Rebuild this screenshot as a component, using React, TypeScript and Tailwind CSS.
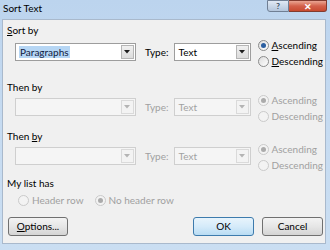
import React from "react";

const font = { fontFamily: 'Lato, "Noto Sans", sans-serif' };

function Combo({ value, selected, disabled, width }: { value: string; selected?: boolean; disabled?: boolean; width: string }) {
  return (
    <div
      className={`${width} h-[18px] flex items-stretch border ${disabled ? "border-[#cfcfcf] bg-[#f5f5f5]" : "border-[#9d9d9d] bg-white"}`}
    >
      <div className="flex-1 flex items-center pl-[3px]">
        {value && (
          <span
            className={`text-[10px] leading-[12px] px-[1px] ${selected ? "bg-[#b6d6f4] text-[#102040]" : disabled ? "text-[#a2a2a2]" : "text-black"}`}
          >
            {value}
          </span>
        )}
      </div>
      <div className="p-[1px] flex">
        <div
          className={`w-[13px] flex items-center justify-center border ${disabled ? "border-[#dadada] bg-[#f3f3f3]" : "border-[#b5b5b5] bg-gradient-to-b from-[#f0f0f0] to-[#dcdcdc]"}`}
        >
          <svg width="6" height="4" viewBox="0 0 6 4">
            <path d="M0 0 L6 0 L3 3.5 Z" fill={disabled ? "#b4b4b4" : "#1e1e1e"} />
          </svg>
        </div>
      </div>
    </div>
  );
}

function Radio({ checked, disabled, label, u }: { checked?: boolean; disabled?: boolean; label: string; u?: number }) {
  return (
    <div className="flex items-center gap-[3px] h-[16px]">
      <div
        className={`w-[11px] h-[11px] rounded-full border flex items-center justify-center ${disabled ? "border-[#cacaca] bg-[#f3f3f3]" : "border-[#8a8b8b] bg-gradient-to-br from-[#dcdcdc] to-white"}`}
      >
        {checked && (
          <div className={`w-[5px] h-[5px] rounded-full ${disabled ? "bg-[#ababab]" : "bg-[#2a5ea0]"}`} />
        )}
      </div>
      <span className={`text-[10px] leading-[12px] ${disabled ? "text-[#a0a0a0]" : "text-black"}`}>
        {u !== undefined ? (
          <>
            {label.slice(0, u)}
            <span className="underline">{label[u]}</span>
            {label.slice(u + 1)}
          </>
        ) : (
          label
        )}
      </span>
    </div>
  );
}

function Row({ label, first, gap, height }: { label: React.ReactNode; first?: boolean; gap: string; height: string }) {
  return (
    <div className={`flex flex-col ${height}`}>
      <div className="text-[10px] leading-[14px] h-[14px] text-black">{label}</div>
      <div className={`flex items-start pl-[8px] ${gap}`}>
        <Combo value={first ? "Paragraphs" : ""} selected={first} disabled={!first} width="w-[123px]" />
        <span className={`ml-[9px] mt-[2px] text-[10px] leading-[14px] ${first ? "text-black" : "text-[#a0a0a0]"}`}>Type:</span>
        <div className="ml-[5px]">
          <Combo value="Text" disabled={!first} width="w-[77px]" />
        </div>
        <div className="ml-[7px] -mt-[6px] flex flex-col">
          <Radio checked disabled={!first} label="Ascending" u={first ? 0 : undefined} />
          <Radio disabled={!first} label="Descending" u={first ? 0 : undefined} />
        </div>
      </div>
    </div>
  );
}

function Button({ children, primary, className }: { children: React.ReactNode; primary?: boolean; className?: string }) {
  return (
    <div
      className={`h-[19px] rounded-[3px] border flex items-center justify-center text-[10px] text-black ${primary ? "border-[#3d7bad] bg-gradient-to-b from-[#e8f4fc] via-[#d5ebfa] to-[#b9dcf3]" : "border-[#707070] bg-gradient-to-b from-[#f3f3f3] via-[#e6e6e6] to-[#d4d4d4]"} ${className ?? ""}`}
    >
      {children}
    </div>
  );
}

export default function App() {
  return (
    <div style={font} className="w-[330px] h-[250px] overflow-hidden bg-gradient-to-b from-[#bcd4ee] via-[#c6dbf1] to-[#cadef2] flex flex-col">
      <div className="h-[19px] flex items-start shrink-0">
        <span className="pl-[3px] pt-[1px] text-[10px] leading-[14px] text-black">Sort Text</span>
        <div className="ml-auto mr-[3px] flex">
          <div className="w-[22px] h-[12px] border border-[#707f94] rounded-bl-[3px] bg-gradient-to-b from-[#e0e9f4] to-[#b4c6dc] flex items-center justify-center text-[8px] font-bold text-[#3a4a60] leading-none">
            ?
          </div>
          <div className="w-[38px] h-[12px] border border-l-0 border-[#823b2f] rounded-br-[3px] bg-gradient-to-b from-[#e9a593] via-[#d3614b] to-[#c84a30] flex items-center justify-center text-[9px] font-bold text-white leading-none">
            ✕
          </div>
        </div>
      </div>
      <div className="ml-[2px] mr-[4px] h-[225px] border border-[#a9b9cc] bg-[#f0f0f0] pl-[4px] pr-[2px] pt-[3px] flex flex-col">
        <Row first gap="mt-[6px]" height="h-[57px]" label={<><span className="underline">S</span>ort by</>} />
        <Row gap="mt-[4px]" height="h-[49px]" label="Then by" />
        <Row gap="mt-[4px]" height="h-[47px]" label={<>Then <span className="underline">b</span>y</>} />
        <div className="text-[10px] leading-[14px] h-[14px] text-black">My list has</div>
        <div className="pl-[11px] mt-[2px] flex gap-[11px]">
          <Radio disabled label="Header row" />
          <Radio checked disabled label="No header row" />
        </div>
        <div className="mt-[9px] flex items-end">
          <Button className="w-[60px] ml-[1px]">
            <span><span className="underline">O</span>ptions...</span>
          </Button>
          <Button primary className="w-[61px] ml-auto">OK</Button>
          <Button className="w-[61px] ml-[8px]">Cancel</Button>
        </div>
      </div>
    </div>
  );
}
